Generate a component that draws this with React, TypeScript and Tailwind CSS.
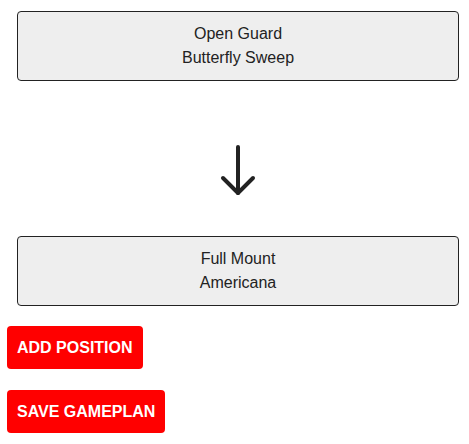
export default function App() {
  const btn =
    'block rounded-[4px] bg-[#ff0000] px-[10px] h-[43px] text-[16px] font-bold uppercase text-white';

  return (
    <div className="min-h-[444px] bg-white pl-[7px] pt-[11px] font-['Liberation_Sans',Arial,sans-serif] text-[#222]">
      <div className="mx-[10px] rounded-[4px] border border-[#222] bg-[#eeeeee] py-[10px] text-center text-[16px] leading-[24px]">
        <div>Open Guard</div>
        <div>Butterfly Sweep</div>
      </div>

      {/* arrow between positions */}
      <div className="flex h-[155px] justify-center pt-[63px]">
        <svg width="40" height="56" viewBox="0 0 40 56" fill="none" stroke="#222" strokeWidth="4" strokeLinecap="round" strokeLinejoin="round">
          <path d="M20 3v46" />
          <path d="M5 34l15 15 15-15" />
        </svg>
      </div>

      <div className="mx-[10px] rounded-[4px] border border-[#222] bg-[#eeeeee] py-[10px] text-center text-[16px] leading-[24px]">
        <div>Full Mount</div>
        <div>Americana</div>
      </div>

      <div className="mt-[20px] flex flex-col items-start gap-[21px]">
        <button className={btn}>Add Position</button>
        <button className={btn}>Save Gameplan</button>
      </div>
    </div>
  );
}
